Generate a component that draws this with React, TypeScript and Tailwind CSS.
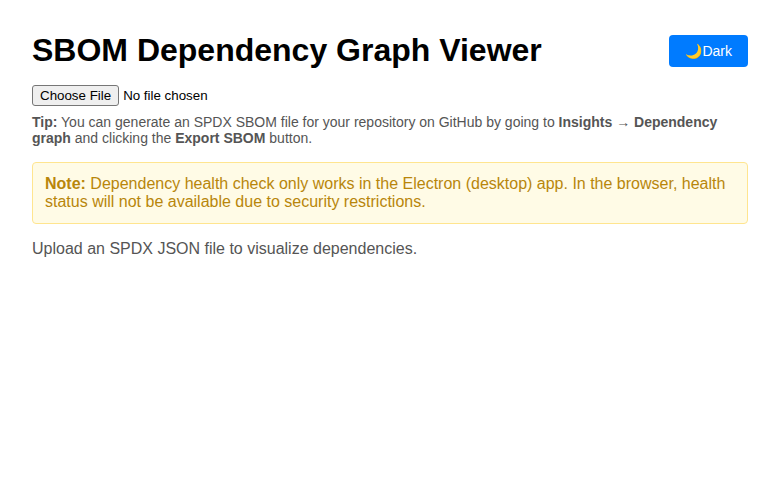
export default function App() {
  return (
    <main className="p-8 font-['Liberation_Sans',Arial,sans-serif] text-base leading-[18px] text-black">
      <header className="flex items-center justify-between">
        <h1 className="text-[32px] font-bold leading-[37px]">SBOM Dependency Graph Viewer</h1>
        <button className="h-8 rounded-[4px] bg-[#007bff] px-4 text-sm leading-4 text-white">🌙Dark</button>
      </header>
      <input
        type="file"
        className="mt-4 block h-[21px] w-[300px] text-[13.333px] leading-[15px] file:mr-1 file:h-[21px] file:rounded-[3px] file:border file:border-solid file:border-[#767676] file:bg-[#efefef] file:px-[7px] file:py-0 file:text-[13.333px] file:text-black"
      />
      <p className="mt-2 text-sm leading-4 text-[#555]">
        <b>Tip:</b> You can generate an SPDX SBOM file for your repository on GitHub by going to{' '}
        <b>Insights → Dependency graph</b> and clicking the <b>Export SBOM</b> button.
      </p>
      <div className="mt-4 rounded-[4px] border border-[#ffe58f] bg-[#fffbe6] p-3 text-[#b8860b]">
        <b>Note:</b> Dependency health check only works in the Electron (desktop) app. In the browser, health status will
        not be available due to security restrictions.
      </div>
      <p className="mt-4 text-[#555]">Upload an SPDX JSON file to visualize dependencies.</p>
    </main>
  );
}
